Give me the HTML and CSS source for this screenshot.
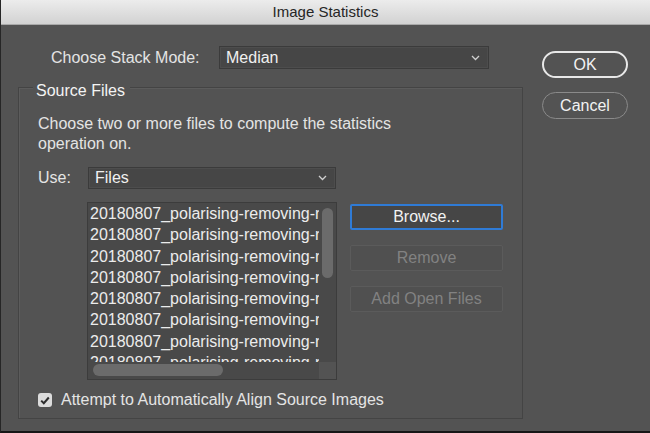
FILE: index.html
```html
<!DOCTYPE html>
<html lang="en">
<head>
    <meta charset="UTF-8">
    <meta name="viewport" content="width=device-width, initial-scale=1.0">
    <title>Image Statistics</title>
    <link rel="stylesheet" href="styles.css">
</head>
<body>
    <div class="window">
        <div class="titlebar">Image Statistics</div>

        <div class="content">
            <div class="main">
                <div class="stack-row">
                    <span class="stack-label">Choose Stack Mode:</span>
                    <div class="select stack-select">
                        <span>Median</span>
                        <svg class="chevron" width="9" height="6" viewBox="0 0 9 6"><path d="M1 1l3.5 3.5L8 1" fill="none" stroke="#d0d0d0" stroke-width="1.3"/></svg>
                    </div>
                </div>

                <div class="group">
                    <span class="group-title">Source Files</span>
                    <p class="hint">Choose two or more files to compute the statistics<br>operation on.</p>

                    <div class="use-row">
                        <span class="use-label">Use:</span>
                        <div class="select use-select">
                            <span>Files</span>
                            <svg class="chevron" width="9" height="6" viewBox="0 0 9 6"><path d="M1 1l3.5 3.5L8 1" fill="none" stroke="#d0d0d0" stroke-width="1.3"/></svg>
                        </div>
                    </div>

                    <div class="files-row">
                        <div class="listbox">
                            <ul class="file-list">
                                <li>20180807_polarising-removing-reflections-01.jpg</li>
                                <li>20180807_polarising-removing-reflections-02.jpg</li>
                                <li>20180807_polarising-removing-reflections-03.jpg</li>
                                <li>20180807_polarising-removing-reflections-04.jpg</li>
                                <li>20180807_polarising-removing-reflections-05.jpg</li>
                                <li>20180807_polarising-removing-reflections-06.jpg</li>
                                <li>20180807_polarising-removing-reflections-07.jpg</li>
                                <li>20180807_polarising-removing-reflections-08.jpg</li>
                            </ul>
                            <div class="vscroll"><div class="vthumb"></div></div>
                            <div class="hscroll"><div class="hthumb"></div></div>
                            <div class="corner"></div>
                        </div>

                        <div class="file-buttons">
                            <button class="btn focus">Browse...</button>
                            <button class="btn" disabled>Remove</button>
                            <button class="btn" disabled>Add Open Files</button>
                        </div>
                    </div>

                    <label class="check-row">
                        <span class="checkbox">
                            <svg width="10" height="9" viewBox="0 0 10 9"><path d="M1.2 4.6l2.6 2.6L8.8 1.5" fill="none" stroke="#2e2e2e" stroke-width="2"/></svg>
                        </span>
                        Attempt to Automatically Align Source Images
                    </label>
                </div>
            </div>

            <div class="side">
                <button class="pill default">OK</button>
                <button class="pill">Cancel</button>
            </div>
        </div>
    </div>
</body>
</html>
```

FILE: styles.css
```css
* {
    margin: 0;
    padding: 0;
    box-sizing: border-box;
}

body {
    background: #535353;
    font-family: "Liberation Sans", Arial, sans-serif;
    font-size: 16px;
    color: #e4e4e4;
}

.window {
    width: 650px;
    height: 433px;
    background: #535353;
    border-left: 1px solid #262626;
    border-bottom: 2px solid #161616;
    display: flex;
    flex-direction: column;
}

.titlebar {
    height: 25px;
    line-height: 24px;
    text-align: center;
    color: #262626;
    font-size: 15px;
    background: linear-gradient(#ececec, #d2d2d2);
    border-bottom: 1px solid #a9a9a9;
}

.content {
    flex: 1;
    display: flex;
}

/* coluna principal */
.main {
    width: 522px;
    padding-left: 17px;
}

.stack-row {
    display: flex;
    align-items: center;
    margin-top: 21px;
    height: 23px;
}

.stack-label {
    width: 201px;
    padding-left: 33px;
}

.select {
    height: 23px;
    display: flex;
    align-items: center;
    justify-content: space-between;
    padding: 0 8px 0 6px;
    background: #464646;
    border: 1px solid #3b3b3b;
    box-shadow: inset 0 0 0 1px #4d4d4d;
    color: #f0f0f0;
}

.stack-select {
    width: 270px;
}

.group {
    margin-top: 18px;
    height: 332px;
    border: 1px solid #444;
    box-shadow: inset 1px 1px 0 #5c5c5c;
    padding: 0 0 0 19px;
}

.group-title {
    display: block;
    width: max-content;
    margin: -7px 0 0 -5px;
    padding: 0 5px 0 3px;
    background: #535353;
    line-height: 20px;
    color: #f4f4f4;
}

.hint {
    margin-top: 13px;
    line-height: 20px;
}

.use-row {
    display: flex;
    align-items: center;
    margin-top: 13px;
    height: 22px;
}

.use-label {
    width: 50px;
}

.use-select {
    width: 248px;
    height: 22px;
}

.files-row {
    display: flex;
    margin-top: 13px;
    margin-left: 49px;
}

.listbox {
    position: relative;
    width: 250px;
    height: 178px;
    background: #494949;
    border: 1px solid #3c3c3c;
    overflow: hidden;
}

.file-list {
    list-style: none;
    padding: 0 17px 0 2px;
}

.file-list li {
    white-space: nowrap;
    overflow: hidden;
    line-height: 21.3px;
    color: #ececec;
}

.vscroll {
    position: absolute;
    top: 0;
    right: 0;
    width: 17px;
    bottom: 17px;
    background: #494949;
}

.vthumb {
    margin: 5px 0 0 3px;
    width: 11px;
    height: 70px;
    border-radius: 6px;
    background: #6b6b6b;
}

.hscroll {
    position: absolute;
    left: 0;
    bottom: 0;
    right: 17px;
    height: 17px;
    background: #494949;
}

.hthumb {
    margin: 2px 0 0 5px;
    width: 130px;
    height: 12px;
    border-radius: 6px;
    background: #6b6b6b;
}

.corner {
    position: absolute;
    right: 0;
    bottom: 0;
    width: 17px;
    height: 17px;
    background: #535353;
}

.file-buttons {
    display: flex;
    flex-direction: column;
    gap: 15px;
    margin-left: 13px;
    padding-top: 2px;
}

.btn {
    width: 153px;
    height: 26px;
    font-family: inherit;
    font-size: 16px;
    color: #f2f2f2;
    background: #474747;
    border: 1px solid #5d5d5d;
    border-radius: 2px;
}

.btn.focus {
    border: 2px solid #2f7bd6;
    background: #464646;
}

.btn:disabled {
    color: #828282;
    background: #505050;
    border-color: #5b5b5b;
}

.check-row {
    display: flex;
    align-items: center;
    gap: 9px;
    margin-top: 10px;
    height: 20px;
}

.checkbox {
    width: 14px;
    height: 14px;
    border-radius: 3px;
    background: #dcdcdc;
    display: flex;
    align-items: center;
    justify-content: center;
}

/* botoes da direita */
.side {
    display: flex;
    flex-direction: column;
    gap: 14px;
    padding: 26px 0 0 19px;
}

.pill {
    width: 86px;
    height: 27px;
    border-radius: 14px;
    font-family: inherit;
    font-size: 16px;
    color: #f2f2f2;
    background: #535353;
    border: 1px solid #8a8a8a;
}

.pill.default {
    border: 2px solid #e8e8e8;
}
```
